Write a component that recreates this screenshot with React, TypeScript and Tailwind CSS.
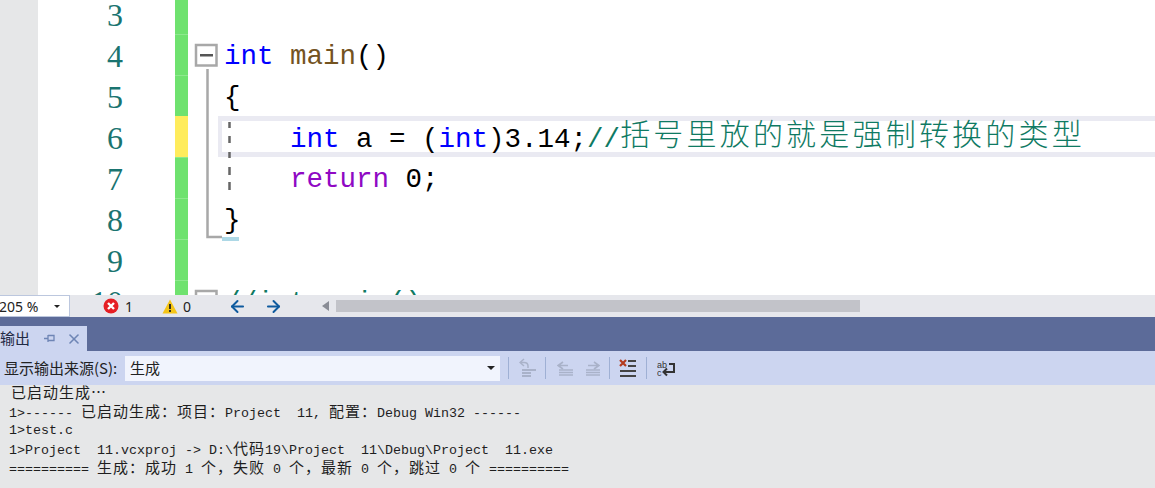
import { ArrowLeft, ArrowRight, X } from "lucide-react";
import type { ReactNode } from "react";

const CJK = /([\u2026\u3000-\u9fff\uff00-\uffef]+)/;

// Latin stays monospaced, CJK runs get their own size so they fill a double cell
function Mixed({ text, cjkClass }: { text: string; cjkClass: string }) {
    return (
        <>
            {text.split(CJK).map((part, i) =>
                CJK.test(part) ? (
                    <span key={i} className={cjkClass}>
                        {part}
                    </span>
                ) : (
                    <span key={i}>{part}</span>
                )
            )}
        </>
    );
}

const kw = "text-[#0000ff]";

const LINES: { n: number; edited?: boolean; current?: boolean; code: ReactNode }[] = [
    { n: 3, code: null },
    {
        n: 4,
        code: (
            <>
                <span className={kw}>int</span> <span className="text-[#74531f]">main</span>()
            </>
        ),
    },
    { n: 5, code: "{" },
    {
        n: 6,
        edited: true,
        current: true,
        code: (
            <>
                {"    "}
                <span className={kw}>int</span> a = (<span className={kw}>int</span>)3.14;
                <span className="text-[#0f7a63]">
                    <Mixed
                        text="//括号里放的就是强制转换的类型"
                        cjkClass="align-[2px] font-['Noto_Sans_CJK_SC'] text-[30px] font-light leading-none tracking-[3.2px]"
                    />
                </span>
            </>
        ),
    },
    {
        n: 7,
        code: (
            <>
                {"    "}
                <span className="text-[#8f08c4]">return</span> 0;
            </>
        ),
    },
    { n: 8, code: "}" },
    { n: 9, code: null },
    { n: 10, code: <span className="text-[#0f7a63]">//int main()</span> },
];

const OUTPUT = [
    "已启动生成…",
    "1>------ 已启动生成：项目：Project  11, 配置：Debug Win32 ------",
    "1>test.c",
    "1>Project  11.vcxproj -> D:\\代码19\\Project  11\\Debug\\Project  11.exe",
    "========== 生成：成功 1 个，失败 0 个，最新 0 个，跳过 0 个 ==========",
];

function EditorLine({ line }: { line: (typeof LINES)[number] }) {
    return (
        <div className="flex h-[41px] shrink-0">
            <div className="w-[38px] bg-[#e6e7e8]" />
            <div className="flex w-[137px] items-center justify-end pr-[52px] pt-[3px] font-['Liberation_Serif'] text-[32px] text-[#1a7470]">
                {line.n}
            </div>
            <div
                className={
                    line.edited
                        ? "w-[13px] bg-[#ffec5c]"
                        : "w-[13px] border-t border-[#8ee88e] bg-[#6fe26f]"
                }
            />
            <div className="w-[30px]" />
            <div
                className={
                    line.current
                        ? "flex flex-1 items-center whitespace-pre border-y-[5px] border-l-4 border-[#eaeaf2] pl-[2px] pt-[5px]"
                        : "flex flex-1 items-center whitespace-pre pl-[6px] pt-[5px]"
                }
            >
                <div>{line.code}</div>
            </div>
        </div>
    );
}

function FoldMargin() {
    return (
        <svg className="absolute left-[188px] top-0" width="60" height="295" fill="none">
            <rect x="8" y="45" width="20.5" height="20.5" stroke="#a8a8a8" strokeWidth="2.5" fill="#fff" />
            <rect x="12" y="54" width="13" height="2.5" fill="#555" />
            <path d="M19.5 69V237H34" stroke="#a8a8a8" strokeWidth="2.5" />
            <path d="M41.5 122v6M41.5 136v7M41.5 152v6M41.5 167v8M41.5 182v8" stroke="#666" strokeWidth="2.5" />
            <rect x="34" y="237" width="17" height="4" fill="#add8e6" />
            <rect x="8" y="291" width="20.5" height="20" stroke="#a8a8a8" strokeWidth="2.5" fill="#fff" />
        </svg>
    );
}

function ErrorIcon() {
    return (
        <svg width="16" height="16" viewBox="0 0 16 16">
            <circle cx="8" cy="8" r="7.5" fill="#e51f24" />
            <path d="M5 5l6 6M11 5l-6 6" stroke="#fff" strokeWidth="2.4" />
        </svg>
    );
}

function WarningIcon() {
    return (
        <svg width="16" height="15" viewBox="0 0 16 15">
            <path d="M8 0.5L15.5 14.5H0.5Z" fill="#f5c518" />
            <path d="M8 5v5M8 11v2" stroke="#222" strokeWidth="1.8" />
        </svg>
    );
}

function Separator({ className }: { className: string }) {
    return <div className={`h-[22px] w-px bg-[#9fb0d4] ${className}`} />;
}

function ToolIcons() {
    const off = "#a9b2c9";
    return (
        <>
            <Separator className="ml-[8px]" />
            <svg className="ml-[10px]" width="17" height="20" viewBox="0 0 17 20" fill="none">
                <path d="M5 1L1 4.5 5 8M1 4.5h4c3 0 4 2 4 3.5V10" stroke={off} strokeWidth="1.5" />
                <path d="M3 12h14M3 15h9M3 18h9" stroke={off} strokeWidth="2" />
            </svg>
            <Separator className="ml-[9px]" />
            <svg className="ml-[11px]" width="16" height="15" viewBox="0 0 16 15" fill="none">
                <path d="M6 1L1 4.5 6 8M1 4.5h10" stroke={off} strokeWidth="1.6" />
                <path d="M2 9h14M2 11.5h14M2 14h14" stroke={off} strokeWidth="1.5" />
            </svg>
            <svg className="ml-[13px]" width="14" height="15" viewBox="0 0 14 15" fill="none">
                <path d="M8 1l5 3.5L8 8M13 4.5H2" stroke={off} strokeWidth="1.6" />
                <path d="M0 9h14M0 11.5h14M0 14h14" stroke={off} strokeWidth="1.5" />
            </svg>
            <Separator className="ml-[9px]" />
            <svg className="ml-[9px]" width="18" height="19" viewBox="0 0 18 19" fill="none">
                <path d="M1 1l6 6M7 1L1 7" stroke="#b33a1e" strokeWidth="2.2" />
                <path d="M9 2h8M9 7h8M1 12h16M1 17h16" stroke="#444" strokeWidth="2" />
            </svg>
            <Separator className="ml-[9px]" />
            <svg className="ml-[10px]" width="19" height="17" viewBox="0 0 19 17" fill="none">
                <text x="0" y="8" fontFamily="Liberation Sans" fontSize="9" fill="#333">
                    ab
                </text>
                <text x="0" y="16" fontFamily="Liberation Sans" fontSize="9" fill="#333">
                    c
                </text>
                <path d="M12 4h5v8H7M10 8.5L6.5 12l3.5 3.5" stroke="#333" strokeWidth="2" />
            </svg>
        </>
    );
}

export default function App() {
    return (
        <div className="flex h-[488px] w-[1155px] flex-col overflow-hidden bg-white font-['Noto_Sans','Noto_Sans_CJK_SC',sans-serif]">
            {/* Editor */}
            <div className="relative h-[295px] shrink-0 overflow-hidden font-['Liberation_Mono','Noto_Sans_CJK_SC',monospace] text-[27.5px] text-black">
                <div className="-mt-[7px] flex flex-col">
                    {LINES.map((line) => (
                        <EditorLine key={line.n} line={line} />
                    ))}
                </div>
                <FoldMargin />
            </div>

            {/* Status strip under the editor */}
            <div className="flex h-[22px] shrink-0 items-center bg-[#e6e7ec] text-[14px] text-[#222]">
                <div className="flex h-full w-[70px] items-center justify-between border border-l-0 border-[#bcc7de] bg-white pr-[9px]">
                    <span className="-ml-px">205 %</span>
                    <span className="border-x-[3px] border-t-[3px] border-x-transparent border-t-[#222]" />
                </div>
                <div className="ml-[33px]">
                    <ErrorIcon />
                </div>
                <span className="ml-[6px] w-[12px]">1</span>
                <div className="ml-[25px]">
                    <WarningIcon />
                </div>
                <span className="ml-[5px] w-[12px]">0</span>
                <ArrowLeft className="ml-[33px] text-[#0e5a9e]" size={19} strokeWidth={2.5} />
                <ArrowRight className="ml-[17px] text-[#0e5a9e]" size={19} strokeWidth={2.5} />
                <span className="ml-[39px] border-y-[5px] border-r-[7px] border-y-transparent border-r-[#8a8d96]" />
                <div className="ml-[7px] h-[12px] w-[524px] bg-[#c2c3c9]" />
            </div>

            {/* Output panel title */}
            <div className="flex h-[34px] shrink-0 items-end bg-[#5c6b99]">
                <div className="flex h-[25px] w-[87px] items-center bg-[#ccd5f0] text-[15px] text-[#1f2a44]">
                    <span className="font-['Noto_Sans_CJK_SC']">输出</span>
                    <svg className="ml-[14px]" width="11" height="11" viewBox="0 0 11 11" fill="none">
                        <path d="M0 5.5h4M4 2v7M4 2.5h6v5H4" stroke="#6e85b5" strokeWidth="1.3" />
                    </svg>
                    <X className="ml-[11px] text-[#6e85b5]" size={16} strokeWidth={2.4} />
                </div>
            </div>

            {/* Output toolbar */}
            <div className="flex h-[34px] shrink-0 items-center bg-[#ccd5f0] text-[15px] text-[#222]">
                <span className="ml-[4px] w-[121px] font-['Noto_Sans_CJK_SC',sans-serif]">显示输出来源(S):</span>
                <div className="flex h-[25px] w-[375px] items-center justify-between bg-[#f1f4fd] pl-[5px] pr-[5px]">
                    <span className="font-['Noto_Sans_CJK_SC']">生成</span>
                    <span className="border-x-[4px] border-t-[4px] border-x-transparent border-t-[#222]" />
                </div>
                <ToolIcons />
            </div>

            {/* Output text */}
            <div className="flex-1 bg-[#e6e7e8] pl-[9px] font-['Liberation_Mono',monospace] text-[13.33px] leading-[18.75px] whitespace-pre text-[#1e1e1e]">
                {OUTPUT.map((row, i) => (
                    <div key={i} className={i === 0 ? "-mt-px h-[18.75px] pl-[2px]" : "h-[18.75px]"}>
                        <Mixed
                            text={row}
                            cjkClass="font-['Noto_Sans_CJK_SC'] text-[15px] leading-none tracking-[1px]"
                        />
                    </div>
                ))}
            </div>
        </div>
    );
}
